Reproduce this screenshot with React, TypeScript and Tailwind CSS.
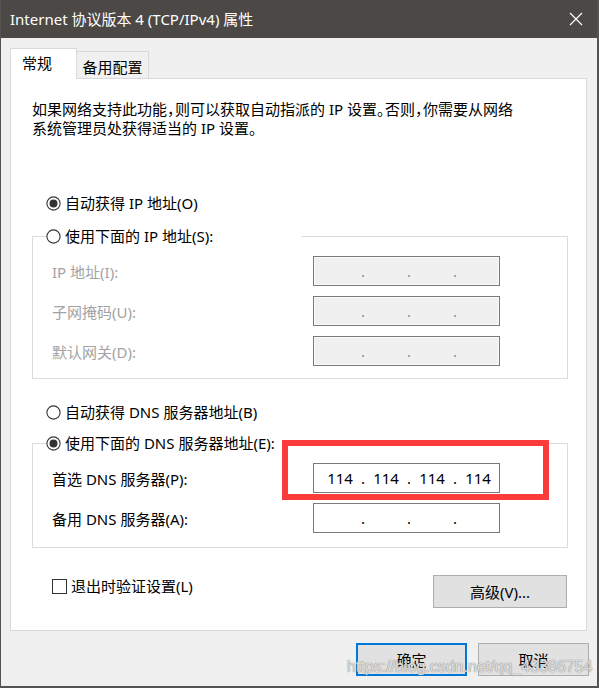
import React, { Fragment } from "react";

const FONT = "font-['Noto_Sans','Noto_Sans_CJK_SC',sans-serif]";

function Radio({ checked }: { checked?: boolean }) {
  return (
    <svg width="15" height="15" viewBox="0 0 15 15" className="shrink-0">
      <circle cx="7.5" cy="7.5" r="6.6" fill="white" stroke="#333333" strokeWidth="1.1" />
      {checked && <circle cx="7.5" cy="7.5" r="4" fill="#333333" />}
    </svg>
  );
}

function Punct({ c }: { c: string }) {
  return <span className="tracking-[-7px]">{c}</span>;
}

function IpField({ values, disabled }: { values?: string[]; disabled?: boolean }) {
  return (
    <div
      className={`w-[187px] h-[30px] shrink-0 border border-[#7a7a7a] flex items-center pl-[8px] text-[15px] leading-[20px] text-black ${
        disabled ? "bg-[#f0f0f0] shadow-[inset_0_0_0_1px_#fbfbfb]" : "bg-white"
      }`}
    >
      {[0, 1, 2, 3].map((i) => (
        <Fragment key={i}>
          <span className="w-[36px] text-center">{values ? values[i] : ""}</span>
          {i < 3 && (
            <span className={`w-[10px] text-center ${disabled ? "text-[#8a8a8a]" : "text-black"}`}>.</span>
          )}
        </Fragment>
      ))}
    </div>
  );
}

function FieldRow({ label, disabled, values }: { label: string; disabled?: boolean; values?: string[] }) {
  return (
    <div className="flex items-center justify-between h-[30px]">
      <span className={`pt-[2px] ${disabled ? "text-[#a3a3a3]" : "text-black"}`}>{label}</span>
      <IpField disabled={disabled} values={values} />
    </div>
  );
}

export default function App() {
  return (
    <div className={`${FONT} text-[15px] leading-[20px] text-black w-[599px] h-[688px] bg-[#f0f0f0] relative flex flex-col border-l border-r-2 border-b-2 border-[#555352] overflow-hidden`}>
      {/* Title bar */}
      <div className="h-[38px] shrink-0 bg-[#4b4846] flex items-center justify-between pl-[9px] pr-[14px]">
        <span className="text-white text-[15px] leading-[20px]">Internet 协议版本 4 (TCP/IPv4) 属性</span>
        <svg width="14" height="14" viewBox="0 0 14 14">
          <path d="M1 1 L13 13 M13 1 L1 13" stroke="white" strokeWidth="1.2" fill="none" />
        </svg>
      </div>

      {/* Tabs + panel */}
      <div className="pl-[9px] pt-[10px] flex flex-col">
        <div className="flex items-end h-[30px]">
          <div className="relative z-10 w-[67px] h-[31px] -mb-px bg-white border border-b-0 border-[#d9d9d9] pl-[11px] pt-[4px]">
            常规
          </div>
          <div className="w-[73px] h-[27px] -ml-px bg-[#f0f0f0] border border-b-0 border-[#d9d9d9] text-center pt-[5px]">
            备用配置
          </div>
        </div>

        <div className="w-[577px] bg-white border border-[#d9d9d9] pl-[21px] pt-[21px] pb-[22px] flex flex-col">
          <p className="leading-[19px]">
            如果网络支持此功能<Punct c="，" />则可以获取自动指派的 IP 设置<Punct c="。" />否则<Punct c="，" />你需要从网络
            <br />
            系统管理员处获得适当的 IP 设置<Punct c="。" />
          </p>

          <div className="mt-[55px] ml-[14px] h-[20px] flex items-center gap-[4px]">
            <Radio checked />
            <span>自动获得 IP 地址(O)</span>
          </div>

          <fieldset className="mt-[13px] w-[536px] border border-[#dcdcdc] p-0 m-0">
            <legend className="ml-[13px] w-[256px] h-[20px] flex items-center gap-[4px] p-0">
              <Radio />
              <span>使用下面的 IP 地址(S):</span>
            </legend>
            <div className="pl-[19px] pr-[67px] pt-[10px] pb-[12px] flex flex-col gap-[10px]">
              <FieldRow label="IP 地址(I):" disabled />
              <FieldRow label="子网掩码(U):" disabled />
              <FieldRow label="默认网关(D):" disabled />
            </div>
          </fieldset>

          <div className="mt-[23px] ml-[14px] h-[20px] flex items-center gap-[4px]">
            <Radio />
            <span>自动获得 DNS 服务器地址(B)</span>
          </div>

          <fieldset className="mt-[11px] w-[536px] border border-[#dcdcdc] p-0 m-0">
            <legend className="ml-[13px] w-[250px] h-[20px] flex items-center gap-[4px] p-0">
              <Radio checked />
              <span>使用下面的 DNS 服务器地址(E):</span>
            </legend>
            <div className="pl-[19px] pr-[67px] pt-[10px] pb-[14px] flex flex-col gap-[10px]">
              <FieldRow label="首选 DNS 服务器(P):" values={["114", "114", "114", "114"]} />
              <FieldRow label="备用 DNS 服务器(A):" />
            </div>
          </fieldset>

          <div className="mt-[27px] w-[535px] flex items-start justify-between">
            <div className="mt-[1px] ml-[20px] h-[20px] flex items-center gap-[4px]">
              <span className="w-[15px] h-[15px] border border-[#333333] bg-white shrink-0" />
              <span>退出时验证设置(L)</span>
            </div>
            <button className="w-[134px] h-[33px] bg-[#e1e1e1] border border-[#adadad] text-black">
              高级(V)...
            </button>
          </div>
        </div>
      </div>

      {/* Bottom buttons */}
      <div className="mt-[12px] flex justify-end gap-[11px] pr-[8px]">
        <button className="w-[111px] h-[33px] bg-[#e1e1e1] border-2 border-[#0078d7] text-black">确定</button>
        <button className="w-[111px] h-[33px] bg-[#e1e1e1] border border-[#adadad] text-black">取消</button>
      </div>

      {/* Red annotation box */}
      <div className="absolute left-[281px] top-[440px] w-[267px] h-[60px] border-[6px] border-[#fb3a3c] pointer-events-none" />

      {/* Watermark */}
      <div className="absolute left-[346px] top-[657px] font-['Liberation_Sans',sans-serif] text-[16px] leading-[20px] text-white/70 [text-shadow:0_0_1px_#8c8c8c,0_0_1px_#8c8c8c] pointer-events-none">
        https://blog.csdn.net/qq_43386754
      </div>
    </div>
  );
}
